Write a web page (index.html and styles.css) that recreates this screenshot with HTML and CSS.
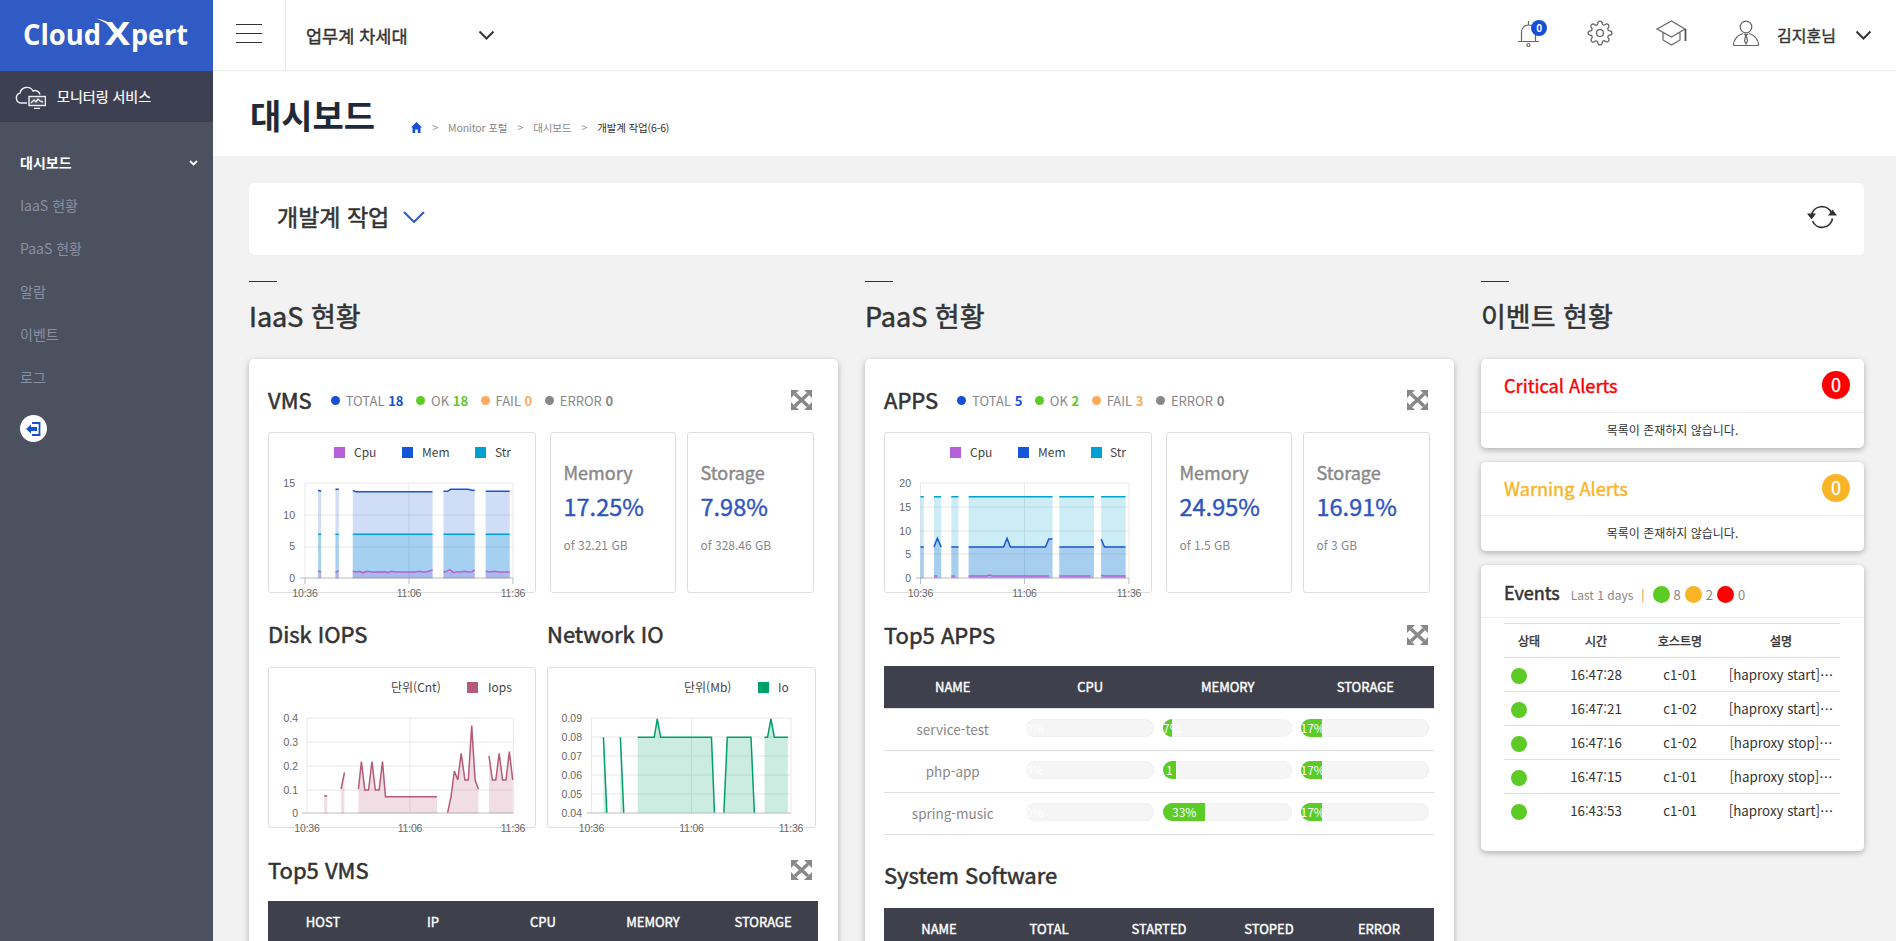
FILE: index.html
```html
<!DOCTYPE html>
<html lang="ko">
<head>
<meta charset="utf-8">
<title>CloudXpert 대시보드</title>
<link rel="stylesheet" href="styles.css">
</head>
<body>
<svg class="defs" width="0" height="0" aria-hidden="true">
  <symbol id="expand" viewBox="0 0 21 20">
    <path class="ex-line" d="M4 4 17 16M17 4 4 16"/>
    <path class="ex-fill" d="M0 0h8L5.500 2.500 3 5 0 8zM21 0h-8l2.500 2.500L18 5l3 3zM0 20h8l-2.500-2.500L3 15l-3-3zM21 20h-8l2.500-2.500L18 15l3-3z"/>
  </symbol>
</svg>
<div class="app">
  <aside class="side">
    <div class="logo">
      <svg class="logo-svg" width="213" height="71" viewBox="0 0 213 71">
        <text class="logo-t" x="23" y="45" textLength="78" lengthAdjust="spacingAndGlyphs">Cloud</text>
        <text class="logo-t logo-x" x="105" y="45" textLength="25" lengthAdjust="spacingAndGlyphs">X</text>
        <text class="logo-t" x="131" y="45" textLength="57" lengthAdjust="spacingAndGlyphs">pert</text>
        <path class="logo-sw" d="M96 18.500C110 21 117 27 120 32l-3 2C113 28 106 22 96 18.500z"/>
      </svg>
    </div>
    <div class="service">
      <svg class="svc-ic" width="31" height="24" viewBox="0 0 31 24">
        <path class="svc-c" d="M12 18H6a5 5 0 0 1-1-9.800A7 7 0 0 1 18 6a5 5 0 0 1 7 3.500"/>
        <rect class="svc-m" x="14" y="11.500" width="16.500" height="9"/>
        <path class="svc-c" d="M16 18l3-3 2 2 2-3 2 2 3 1M19 23.500h6"/>
      </svg>
      <span>모니터링 서비스</span>
    </div>
    <nav class="nav">
      <a class="nav-i on">대시보드<svg class="nav-chev" width="9" height="6" viewBox="0 0 9 6"><path d="M1 1l3.500 3.500L8 1"/></svg></a>
      <a class="nav-i">IaaS 현황</a>
      <a class="nav-i">PaaS 현황</a>
      <a class="nav-i">알람</a>
      <a class="nav-i">이벤트</a>
      <a class="nav-i">로그</a>
      <span class="logout"><svg width="15" height="14" viewBox="0 0 15 14"><path class="lo-b" d="M6 1h7.500v12H6"/><path class="lo-a" d="M0 7l5-4.500V5h6v4H5v2.500z"/></svg></span>
    </nav>
  </aside>
  <main class="main">
    <header class="top">
      <button class="burger" aria-label="메뉴"><i></i><i></i><i></i></button>
      <div class="scope"><span>업무계 차세대</span><svg class="chev" width="17" height="10" viewBox="0 0 17 10"><path d="M1.500 1.500l7 7 7-7"/></svg></div>
      <div class="top-r">
        <span class="bell">
          <svg width="22" height="27" viewBox="0 0 22 27"><path class="ic" d="M3.500 21v-9a7 7 0 0 1 14 0v9M10.500 1v4M0 21.500h21"/><circle class="ic" cx="10.500" cy="25" r="1.500"/></svg>
          <b class="badge">0</b>
        </span>
        <svg class="t-gear" width="26" height="26" viewBox="0 0 24 24"><circle class="ic" cx="12" cy="12" r="3.200"/><path class="ic" d="M19.400 15a1.650 1.650 0 0 0 .33 1.820l.06.06a2 2 0 0 1 0 2.830 2 2 0 0 1-2.830 0l-.06-.06a1.650 1.650 0 0 0-1.820-.33 1.650 1.650 0 0 0-1 1.510V21a2 2 0 0 1-2 2 2 2 0 0 1-2-2v-.09A1.650 1.650 0 0 0 9 19.400a1.650 1.650 0 0 0-1.820.33l-.06.06a2 2 0 0 1-2.830 0 2 2 0 0 1 0-2.830l.06-.06a1.650 1.650 0 0 0 .33-1.820 1.650 1.650 0 0 0-1.510-1H3a2 2 0 0 1-2-2 2 2 0 0 1 2-2h.09A1.650 1.650 0 0 0 4.600 9a1.650 1.650 0 0 0-.33-1.820l-.06-.06a2 2 0 0 1 0-2.830 2 2 0 0 1 2.830 0l.06.06a1.650 1.650 0 0 0 1.820.33H9a1.650 1.650 0 0 0 1-1.510V3a2 2 0 0 1 2-2 2 2 0 0 1 2 2v.09a1.650 1.650 0 0 0 1 1.510 1.650 1.650 0 0 0 1.820-.33l.06-.06a2 2 0 0 1 2.830 0 2 2 0 0 1 0 2.830l-.06.06a1.650 1.650 0 0 0-.33 1.820V9a1.650 1.650 0 0 0 1.510 1H21a2 2 0 0 1 2 2 2 2 0 0 1-2 2h-.09a1.650 1.650 0 0 0-1.510 1z"/></svg>
        <svg class="t-cap" width="31" height="26" viewBox="0 0 31 26"><path class="ic" d="M1 9l14.500-8L29 9l-13.500 8zM7 12.500V20l8.500 5 8.500-5v-7.500"/><path class="ic2" d="M29.500 9v12"/></svg>
        <svg class="t-user" width="26" height="26" viewBox="0 0 26 26"><circle class="ic" cx="13" cy="7" r="5.800"/><path class="ic" d="M.5 25.500c0-7 3.500-10 9.500-12M25.500 25.500c0-7-3.500-10-9.500-12M.5 25.500h25M13 14l-1.500 7 1.500 3 1.500-3zM11 14l2 1.500 2-1.500"/></svg>
        <span class="user">김지훈님</span>
        <svg class="chev" width="17" height="10" viewBox="0 0 17 10"><path d="M1.500 1.500l7 7 7-7"/></svg>
      </div>
    </header>
    <div class="ptitle">
      <h1>대시보드</h1>
      <ol class="crumb">
        <li><svg class="home" width="11" height="11" viewBox="0 0 11 11"><path d="M5.500 0L11 5.500H9.500V11H6.800V7.500H4.200V11H1.500V5.500H0z"/></svg></li>
        <li class="sep">&gt;</li><li>Monitor 포털</li>
        <li class="sep">&gt;</li><li>대시보드</li>
        <li class="sep">&gt;</li><li class="cur">개발계 작업(6-6)</li>
      </ol>
    </div>
    <div class="content">
      <section class="panel">
        <div class="panel-l"><span>개발계 작업</span><svg class="pchev" width="22" height="12" viewBox="0 0 22 12"><path d="M1 1l10 10L21 1"/></svg></div>
        <svg width="32" height="26" viewBox="0 0 32 26"><path class="ref" d="M5.500 11.500A10.500 10.500 0 0 1 25.500 9M26.500 14.500A10.500 10.500 0 0 1 6.500 17"/><path class="ref-a" d="M1 9.500h9l-4.500 6zM22 11.500h9l-4.500-6z"/></svg>
      </section>
      <div class="cols">
        <section class="col">
          <div class="rule"></div>
          <h2>IaaS 현황</h2>
          <div class="card">
            <div class="ch"><div class="ch-l"><h3>VMS</h3>
              <ul class="lg"><li class="blue"><i></i>TOTAL <b>18</b></li><li class="green"><i></i>OK <b>18</b></li><li class="orange"><i></i>FAIL <b>0</b></li><li class="gray"><i></i>ERROR <b>0</b></li></ul></div>
              <svg class="exp"><use href="#expand"/></svg></div>
            <div class="stats">
              <div class="box chartbox">
                <svg class="plot" width="268" height="161" viewBox="268 432 268 161">
                  <g class="grid"><path d="M305 483H513M305 515H513M305 547H513M409 483V578M513 483V578M305 483V578"/></g>
                  <path class="axis" d="M300 578H513M305 578V584M409 578V584M513 578V584"/>
                  <g transform="translate(250 370) scale(.3764 .3333)">
                    <path class="f-mem" d="M181 361H189V625H181ZM227 358H236V625H227ZM273 362L282 365H485V625H273ZM514 364H525L533 358H580L597 362V625H514ZM626 364H690V625H626Z"/>
                    <path class="f-str" d="M181 493H189V625H181ZM227 493H236V625H227ZM273 493H485V625H273ZM514 493H597V625H514ZM626 493H690V625H626Z"/>
                    <path class="f-cpu" d="M181 603H189V625H181ZM227 605H236V625H227ZM273 603H485V625H273ZM514 605H597V625H514ZM626 605H690V625H626Z"/>
                    <path class="l-str" d="M181 493H189M227 493H236M273 493H485M514 493H597M626 493H690"/>
                    <path class="l-mem" d="M181 361L189 364M227 358H236M273 362L282 365H485M514 364H525L533 358H580L589 361H597M626 364H690"/>
                    <path class="l-cpu" d="M181 603L189 606M227 607L236 602M273 604L282 606 291 604 300 609 309 604 320 605 330 607 340 605 350 607 358 605 366 608 376 604 386 606H440L450 604 460 606 470 605 485 600M514 606L522 604 531 599 540 608 550 605 560 606 570 604 580 606 590 605 597 600M626 604L636 606 650 604 660 606H690"/>
                  </g>
                  <g class="yl"><text x="295" y="487">15</text><text x="295" y="518.500">10</text><text x="295" y="550">5</text><text x="295" y="582">0</text></g>
                  <g class="xl"><text x="305" y="597">10:36</text><text x="409" y="597">11:06</text><text x="513" y="597">11:36</text></g>
                  <rect class="s-cpu" x="334" y="447" width="11" height="11"/><text class="lt" x="354" y="457">Cpu</text>
                  <rect class="s-mem" x="402" y="447" width="11" height="11"/><text class="lt" x="422" y="457">Mem</text>
                  <rect class="s-str" x="475" y="447" width="11" height="11"/><text class="lt" x="495" y="457">Str</text>
                </svg>
              </div>
              <div class="box stat"><h4>Memory</h4><p class="pct">17.25%</p><p class="of">of 32.21 GB</p></div>
              <div class="box stat"><h4>Storage</h4><p class="pct">7.98%</p><p class="of">of 328.46 GB</p></div>
            </div>
            <div class="two">
              <div>
                <h3 class="sub">Disk IOPS</h3>
                <div class="box">
                  <svg class="plot" width="268" height="161" viewBox="268 667 268 161">
                    <g class="grid"><path d="M307 718H513.500M307 742H513.500M307 766H513.500M307 790H513.500M410 718V813M513.500 718V813M307 718V813"/></g>
                    <path class="axis" d="M302 813H513.500"/>
                    <g transform="translate(250 610) scale(.3764 .3333)">
                      <path class="f-io" d="M197 558H205V610H197ZM242 537L251 487V610H242ZM288 537L296 455 305 540H315L324 455 333 540H343L352 455 360 560H497V610H288ZM525 608L534 560 543 483 552 510 561 430 571 510H580L589 347 598 510 607 538V610H525ZM635 438L644 510H653L662 430 671 510H680L689 425 698 510V610H635Z"/>
                      <path class="l-io" d="M197 558H205M242 537L251 487M288 537L296 455 305 540H315L324 455 333 540H343L352 455 360 560H497M525 608L534 560 543 483 552 510 561 430 571 510H580L589 347 598 510 607 538M635 438L644 510H653L662 430 671 510H680L689 425 698 510"/>
                    </g>
                    <g class="yl"><text x="298" y="722">0.4</text><text x="298" y="745.500">0.3</text><text x="298" y="770">0.2</text><text x="298" y="794">0.1</text><text x="298" y="817">0</text></g>
                    <g class="xl"><text x="307" y="832">10:36</text><text x="410" y="832">11:06</text><text x="513" y="832">11:36</text></g>
                    <text class="lt" x="391" y="692">단위(Cnt)</text>
                    <rect class="s-io" x="467" y="682" width="11" height="11"/><text class="lt" x="488" y="692">Iops</text>
                  </svg>
                </div>
              </div>
              <div>
                <h3 class="sub">Network IO</h3>
                <div class="box">
                  <svg class="plot" width="269" height="161" viewBox="547 667 269 161">
                    <g class="grid"><path d="M591.500 718H791M591.500 737H791M591.500 756H791M591.500 775H791M591.500 794H791M691.500 718V813M791 718V813M591.500 718V813"/></g>
                    <path class="axis" d="M587 813H791"/>
                    <g transform="translate(250 610) scale(.3764 .3333)">
                      <path class="f-net" d="M939 382L948 608H939ZM984 382L993 608H984ZM1030 382H1074L1082 327 1091 382H1226L1234 608H1030ZM1259 608L1268 382H1331L1340 608ZM1367 382H1375L1384 327 1393 382H1429V608H1367Z"/>
                      <path class="l-net" d="M939 382L948 608M984 382L993 608M1030 382H1074L1082 327 1091 382H1226L1234 608M1259 608L1268 382H1331L1340 608M1367 382H1375L1384 327 1393 382H1429"/>
                    </g>
                    <g class="yl"><text x="582" y="722">0.09</text><text x="582" y="741">0.08</text><text x="582" y="760">0.07</text><text x="582" y="779">0.06</text><text x="582" y="798">0.05</text><text x="582" y="817">0.04</text></g>
                    <g class="xl"><text x="591.500" y="832">10:36</text><text x="691.500" y="832">11:06</text><text x="791" y="832">11:36</text></g>
                    <text class="lt" x="684" y="692">단위(Mb)</text>
                    <rect class="s-net" x="758" y="682" width="11" height="11"/><text class="lt" x="778" y="692">Io</text>
                  </svg>
                </div>
              </div>
            </div>
            <div class="ch ch-sub"><h3>Top5 VMS</h3><svg class="exp"><use href="#expand"/></svg></div>
            <table class="tbl t-gap"><thead><tr><th>HOST</th><th>IP</th><th>CPU</th><th>MEMORY</th><th>STORAGE</th></tr></thead></table>
          </div>
        </section>
        <section class="col">
          <div class="rule"></div>
          <h2>PaaS 현황</h2>
          <div class="card">
            <div class="ch"><div class="ch-l"><h3>APPS</h3>
              <ul class="lg"><li class="blue"><i></i>TOTAL <b>5</b></li><li class="green"><i></i>OK <b>2</b></li><li class="orange"><i></i>FAIL <b>3</b></li><li class="gray"><i></i>ERROR <b>0</b></li></ul></div>
              <svg class="exp"><use href="#expand"/></svg></div>
            <div class="stats">
              <div class="box chartbox">
                <svg class="plot" width="268" height="161" viewBox="884 432 268 161">
                  <g class="grid"><path d="M920.500 483H1129M920.500 507H1129M920.500 531H1129M920.500 554H1129M1024.500 483V578M1129 483V578M920.500 483V578"/></g>
                  <path class="axis" d="M916 578H1129M920.500 578V584M1024.500 578V584M1129 578V584"/>
                  <g transform="translate(870 370) scale(.3764 .3333)">
                    <path class="f-str" d="M134 380H143V625H134ZM170 380H189V625H170ZM216 380H235V625H216ZM262 380H485V625H262ZM503 380H595V625H503ZM614 380H679V625H614Z"/>
                    <path class="f-mem" d="M134 531H143V625H134ZM170 531L179 505 189 531V625H170ZM216 531H235V625H216ZM262 531H355L364 505 373 531H466L475 507H485V625H262ZM503 531H595V625H503ZM614 507L623 531H679V625H614Z"/>
                    <path class="f-cpu" d="M170 618H179V625H170ZM216 618H226V625H216ZM262 618H476V625H262ZM503 618H586V625H503ZM614 616H679V625H614Z"/>
                    <path class="l-str" d="M134 380H143M170 380H189M216 380H235M262 380H485M503 380H595M614 380H679"/>
                    <path class="l-mem" d="M134 531H143M170 531L179 505 189 531M216 531H235M262 531H355L364 505 373 531H466L475 507H485M503 531H595M614 507L623 531H679"/>
                    <path class="l-cpu" d="M170 618H179M216 618H226M262 618H310L318 615 326 618H476M503 618H586M614 616L623 618H679"/>
                  </g>
                  <g class="yl"><text x="911" y="487">20</text><text x="911" y="511">15</text><text x="911" y="535">10</text><text x="911" y="558">5</text><text x="911" y="582">0</text></g>
                  <g class="xl"><text x="920.500" y="597">10:36</text><text x="1024.500" y="597">11:06</text><text x="1129" y="597">11:36</text></g>
                  <rect class="s-cpu" x="950" y="447" width="11" height="11"/><text class="lt" x="970" y="457">Cpu</text>
                  <rect class="s-mem" x="1018" y="447" width="11" height="11"/><text class="lt" x="1038" y="457">Mem</text>
                  <rect class="s-str" x="1091" y="447" width="11" height="11"/><text class="lt" x="1110" y="457">Str</text>
                </svg>
              </div>
              <div class="box stat"><h4>Memory</h4><p class="pct">24.95%</p><p class="of">of 1.5 GB</p></div>
              <div class="box stat"><h4>Storage</h4><p class="pct">16.91%</p><p class="of">of 3 GB</p></div>
            </div>
            <div class="ch ch-apps"><h3>Top5 APPS</h3><svg class="exp"><use href="#expand"/></svg></div>
            <table class="tbl t-gap">
              <thead><tr><th>NAME</th><th>CPU</th><th>MEMORY</th><th>STORAGE</th></tr></thead>
              <tbody>
                <tr><td>service-test</td>
                  <td class="pc"><div class="bar"><div class="fill" style="width:0%">0%</div></div></td>
                  <td class="pc"><div class="bar"><div class="fill" style="width:7%">7%</div></div></td>
                  <td class="pc"><div class="bar"><div class="fill" style="width:17%">17%</div></div></td></tr>
                <tr><td>php-app</td>
                  <td class="pc"><div class="bar"><div class="fill" style="width:0%">0%</div></div></td>
                  <td class="pc"><div class="bar"><div class="fill" style="width:10%">1</div></div></td>
                  <td class="pc"><div class="bar"><div class="fill" style="width:17%">17%</div></div></td></tr>
                <tr><td>spring-music</td>
                  <td class="pc"><div class="bar"><div class="fill" style="width:0%">0%</div></div></td>
                  <td class="pc"><div class="bar"><div class="fill" style="width:33%">33%</div></div></td>
                  <td class="pc"><div class="bar"><div class="fill" style="width:17%">17%</div></div></td></tr>
              </tbody>
            </table>
            <h3 class="sys">System Software</h3>
            <table class="tbl t-sys"><thead><tr><th>NAME</th><th>TOTAL</th><th>STARTED</th><th>STOPED</th><th>ERROR</th></tr></thead></table>
          </div>
        </section>
        <section class="col">
          <div class="rule"></div>
          <h2>이벤트 현황</h2>
          <div class="alert">
            <div class="a-h crit"><span>Critical Alerts</span><b>0</b></div>
            <div class="a-b">목록이 존재하지 않습니다.</div>
          </div>
          <div class="alert">
            <div class="a-h warn"><span>Warning Alerts</span><b>0</b></div>
            <div class="a-b">목록이 존재하지 않습니다.</div>
          </div>
          <div class="alert events">
            <div class="e-h"><h3>Events</h3><span class="e-d">Last 1 days</span><span class="e-s">|</span>
              <i class="dot d-g"></i><span class="e-n">8</span><i class="dot d-o"></i><span class="e-n">2</span><i class="dot d-r"></i><span class="e-n">0</span></div>
            <table class="etbl">
              <colgroup><col class="c1"><col class="c2"><col class="c3"><col class="c4"></colgroup>
              <thead><tr><th>상태</th><th>시간</th><th>호스트명</th><th>설명</th></tr></thead>
              <tbody>
                <tr><td><i class="dot d-g"></i></td><td>16:47:28</td><td>c1-01</td><td>[haproxy start]…</td></tr>
                <tr><td><i class="dot d-g"></i></td><td>16:47:21</td><td>c1-02</td><td>[haproxy start]…</td></tr>
                <tr><td><i class="dot d-g"></i></td><td>16:47:16</td><td>c1-02</td><td>[haproxy stop]…</td></tr>
                <tr><td><i class="dot d-g"></i></td><td>16:47:15</td><td>c1-01</td><td>[haproxy stop]…</td></tr>
                <tr><td><i class="dot d-g"></i></td><td>16:43:53</td><td>c1-01</td><td>[haproxy start]…</td></tr>
              </tbody>
            </table>
          </div>
        </section>
      </div>
    </div>
  </main>
</div>
</body>
</html>
```
FILE: styles.css
```css
* { box-sizing: border-box; }
html, body { margin: 0; height: 100%; overflow: hidden; }
body { font-family: "Noto Sans CJK KR", "Noto Sans", sans-serif; color: #333; background: #f2f2f2; }
h1, h2, h3, h4, p, ul, ol { margin: 0; padding: 0; list-style: none; font-weight: 400; }
.defs { position: absolute; }
.app { display: flex; height: 941px; overflow: hidden; }

/* medium-weight look (only regular and bold faces are installed) */
h2, h3, .panel-l span { -webkit-text-stroke: .55px currentColor; }
h4, .a-h span, .scope span, .user, .tbl th, .etbl th, .pct { -webkit-text-stroke: .4px currentColor; }

/* sidebar */
.side { width: 213px; flex: none; background: #4c5160; }
.logo { height: 71px; background: #305bc4; }
.logo-svg { display: block; }
.logo-t { font: 700 29px "Open Sans", sans-serif; fill: #fff; }
.logo-x { font-size: 33px; }
.logo-sw { fill: #fff; }
.service { height: 51px; background: #3c4052; display: flex; align-items: center; padding: 0 0 2px 15px; color: #fff; font-size: 14px; gap: 11px; }
.service span { -webkit-text-stroke: .2px currentColor; }
.svc-ic { margin-top: 3px; }
.svc-c { fill: none; stroke: #f0f0f2; stroke-width: 1.400; }
.svc-m { fill: #4c5160; stroke: #f0f0f2; stroke-width: 1.400; }
.nav { display: flex; flex-direction: column; padding: 19px 15px 0 20px; }
.nav-i { height: 43px; line-height: 43px; font-size: 14px; color: #8a90a3; display: flex; align-items: center; justify-content: space-between; }
.nav-i.on { color: #fff; font-weight: 700; }
.nav-chev { fill: none; stroke: #fff; stroke-width: 1.800; }
.logout { width: 27px; height: 27px; border-radius: 50%; background: #fff; margin-top: 16px; display: flex; align-items: center; justify-content: center; }
.lo-b { fill: none; stroke: #1650d8; stroke-width: 1.800; }
.lo-a { fill: #1650d8; }

/* header */
.main { flex: 1; min-width: 0; }
.top { height: 71px; background: #fff; border-bottom: 1px solid #ececec; display: flex; align-items: center; }
.burger { width: 73px; height: 70px; border: 0; border-right: 1px solid #ececec; background: none; padding: 24px 0 0 23px; display: flex; flex-direction: column; align-items: flex-start; gap: 8px; }
.burger i { display: block; width: 26px; height: 1px; background: #333; }
.scope { display: flex; align-items: center; font-size: 17.500px; color: #333; margin-left: 20px; width: 189px; justify-content: space-between; }
.chev { fill: none; stroke: #333; stroke-width: 2; }
.top-r { margin-left: auto; display: flex; align-items: center; padding-right: 24px; }
.bell { position: relative; display: block; height: 27px; margin-right: 47px; margin-top: -4px; }
.bell svg { display: block; }
.badge { position: absolute; left: 13px; top: 0; width: 16px; height: 16px; border-radius: 50%; background: #1650d8; color: #fff; font-size: 10px; line-height: 16px; text-align: center; font-weight: 700; }
.ic { fill: none; stroke: #666; stroke-width: 1.200; }
.ic2 { fill: none; stroke: #555; stroke-width: 1.800; }
.t-gear { margin-right: 43px; margin-top: -4px; }
.t-cap { margin-right: 46px; margin-top: -4px; }
.t-user { margin-top: -4px; }
.user { font-size: 16px; color: #333; margin: 0 19px 0 18px; }

/* page title */
.ptitle { height: 85px; background: #fff; padding: 21px 0 0 37px; display: flex; align-items: flex-start; }
h1 { font-size: 34px; font-weight: 700; line-height: 46px; color: #1f2a38; }
.crumb { display: flex; align-items: center; margin: 27px 0 0 36px; font-size: 10.500px; letter-spacing: -.15px; color: #888; height: 16px; }
.home { display: block; fill: #1650d8; }
.sep { color: #999; margin: 0 10px; font-size: 11px; }
.cur { color: #333; }

/* content */
.content { padding: 27px 32px 0 36px; }
.panel { height: 72px; background: #fff; border-radius: 5px; display: flex; align-items: center; justify-content: space-between; padding: 0 26px 4px 28px; }
.panel-l { display: flex; align-items: center; gap: 14px; font-size: 23px; color: #333; }
.panel-l span { margin-top: -3px; }
.pchev { fill: none; stroke: #305bc4; stroke-width: 2; }
.ref { fill: none; stroke: #333; stroke-width: 1.700; }
.ref-a { fill: #333; }
.cols { display: flex; gap: 27px; margin-top: 26px; }
.col { width: 589px; flex: none; }
.col:last-child { width: 383px; }
.rule { width: 28px; height: 1px; background: #333; }
h2 { font-size: 27px; line-height: 38px; margin: 15px 0 24px; color: #333; }

.card { background: #fff; border-radius: 5px; box-shadow: 0 2px 6px rgba(0, 0, 0, .28); padding: 26px 20px 40px 19px; height: 700px; }
.ch { display: flex; align-items: center; justify-content: space-between; padding-right: 6px; height: 30px; }
.ch-l { display: flex; align-items: center; }
.ch-l h3 { margin-top: -3px; }
h3 { font-size: 22px; line-height: 30px; color: #333; }
.exp { width: 21px; height: 20px; flex: none; }
.ex-line { fill: none; stroke: #888; stroke-width: 3.500; }
.ex-fill { fill: #888; }
.lg { display: flex; margin-left: 19px; font-size: 13px; color: #888; gap: 12.500px; }
.lg li { display: flex; align-items: center; white-space: pre; }
.lg i { width: 9px; height: 9px; border-radius: 50%; margin-right: 6px; }
.lg b { font-weight: 700; }
.blue i { background: #1650d8; } .blue b { color: #1650d8; }
.green i { background: #5ccb25; } .green b { color: #5ccb25; }
.orange i { background: #ffaa5a; } .orange b { color: #ffaa5a; }
.gray i { background: #888; } .gray b { color: #888; }

.stats { display: flex; margin-top: 17px; }
.chartbox { width: 268px; flex: none; }
.stat { width: 126px; flex: none; margin-left: 14px; padding: 25px 0 0 12.500px; }
.stat:last-child { width: 127px; margin-left: 11px; }
.box { height: 161px; border: 1px solid #ddd; border-radius: 3px; position: relative; }
.plot { display: block; margin: -1px; overflow: visible; }
h4 { font-size: 18px; line-height: 28px; color: #888; }
.pct { font-size: 23.500px; line-height: 36px; color: #2f55c0; margin-top: 2px; }
.of { font-size: 12px; line-height: 20px; color: #888; margin-top: 11px; }

.two { display: grid; grid-template-columns: 268px 269px; column-gap: 11px; margin-top: 27px; }
.sub { margin-bottom: 21px; line-height: 26px; }
.ch-sub { margin-top: 27px; }
.ch-sub h3 { margin-top: -3px; }
.ch-apps { margin-top: 27px; }
.ch-apps h3 { margin-top: -3px; }
.sys { margin-top: 24px; }
.t-gap { margin-top: 16px; }
.t-sys { margin-top: 19px; }

/* charts */
.grid path { fill: none; stroke: #e8e8e8; stroke-width: 1; }
.axis { fill: none; stroke: #bbb; stroke-width: 1; }
.yl text { font: 10.500px "Liberation Sans", sans-serif; fill: #666; text-anchor: end; }
.xl text { font: 10.500px "Liberation Sans", sans-serif; fill: #666; text-anchor: middle; letter-spacing: -.2px; }
.lt { font: 12px "Noto Sans CJK KR", sans-serif; fill: #444; }
.s-cpu { fill: #b660d8; } .s-mem { fill: #1556d8; } .s-str { fill: #00a0d2; } .s-io { fill: #b55a78; } .s-net { fill: #00a06a; }
.f-cpu { fill: rgba(182, 96, 216, .2); } .f-mem { fill: rgba(21, 86, 216, .2); } .f-str { fill: rgba(0, 160, 210, .2); }
.f-io { fill: rgba(181, 90, 120, .2); } .f-net { fill: rgba(0, 160, 106, .2); }
.l-cpu, .l-mem, .l-str, .l-io, .l-net { fill: none; stroke-width: 1.500; vector-effect: non-scaling-stroke; }
.l-cpu { stroke: #b660d8; } .l-mem { stroke: #1556d8; } .l-str { stroke: #00a0d2; } .l-io { stroke: #b55a78; } .l-net { stroke: #00a06a; }

/* tables */
.tbl { width: 550px; border-collapse: collapse; table-layout: fixed; }
.tbl th { height: 42px; background: #3e414c; color: #fff; font-size: 13px; font-weight: 400; border-bottom: 1px solid #ddd; padding: 0; }
.tbl td { height: 42px; border-bottom: 1px solid #ddd; text-align: center; font-size: 13.500px; color: #888; padding: 0; }
.tbl td.pc { padding: 0 5px 2px 4px; }
.bar { height: 18px; border-radius: 9px; background: #f5f5f5; overflow: hidden; box-shadow: inset 0 0 1px rgba(0, 0, 0, .12); }
.fill { height: 18px; background: #5ccb25; color: #fff; font-size: 12px; line-height: 18px; text-align: center; white-space: nowrap; }

/* alerts */
.alert { background: #fff; border-radius: 5px; box-shadow: 0 2px 6px rgba(0, 0, 0, .28); margin-bottom: 14px; }
.a-h { height: 54px; border-bottom: 1px solid #eee; display: flex; align-items: center; justify-content: space-between; padding: 0 14px 1px 23px; font-size: 18.200px; }
.a-h b { width: 28px; height: 28px; border-radius: 50%; color: #fff; font-size: 18px; line-height: 27px; text-align: center; font-weight: 400; -webkit-text-stroke: .3px #fff; }
.crit { color: #f00; } .crit b { background: #f00; }
.warn { color: #f9b428; } .warn b { background: #f9b428; }
.a-b { height: 35px; line-height: 33px; text-align: center; font-size: 12px; color: #333; }
.events { height: 286px; }
.e-h { height: 53px; border-bottom: 1px solid #eee; display: flex; align-items: center; padding: 4px 0 0 23px; }
.e-h h3 { font-size: 18px; margin-top: -2px; }
.e-d { font-size: 12px; color: #888; margin: 2px 0 0 11px; }
.e-s { font-size: 12px; color: #c98a50; margin: 0 8px; }
.e-n { font-size: 13px; color: #888; margin: 2px 4px 0 4px; }
.dot { display: inline-block; width: 16px; height: 16px; border-radius: 50%; vertical-align: middle; }
.e-h .dot { width: 17px; height: 17px; margin-top: 2px; }
.d-g { background: #5ccb25; } .d-o { background: #f9b428; } .d-r { background: #f00; }
.etbl { width: 336px; margin: 5px 0 0 23px; border-collapse: collapse; table-layout: fixed; font-size: 13.300px; }
.c1 { width: 50px; } .c2, .c3 { width: 84px; } .c4 { width: 118px; }
.etbl th { height: 34px; border-top: 1px solid #ddd; border-bottom: 1px solid #ddd; font-size: 12px; font-weight: 400; color: #333; padding: 0; }
.etbl td { height: 34px; border-bottom: 1px solid #ddd; text-align: center; color: #333; padding: 0; white-space: nowrap; }
.etbl tr:last-child td { border-bottom: 0; }
.etbl td:first-child { text-align: left; padding-left: 7px; }
```
